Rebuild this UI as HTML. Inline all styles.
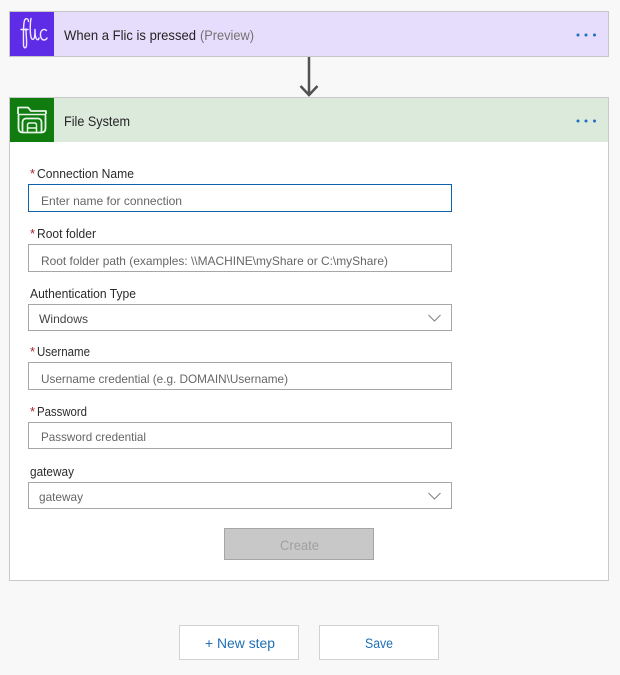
<!DOCTYPE html>
<html><head><meta charset="utf-8"><style>
html,body{margin:0;padding:0;background:#f8f8f8;width:620px;height:675px;overflow:hidden}
svg{display:block}
text{font-family:"Liberation Sans",sans-serif;fill:#252423}
.l{font-size:12.5px;fill:#2b2b2b}
.p{font-size:12px;fill:#666}
.r{font-size:13px;fill:#a8262c}
</style></head><body>
<svg width="620" height="675" viewBox="0 0 620 675" xmlns="http://www.w3.org/2000/svg">
<rect width="620" height="675" fill="#f8f8f8"/>
<rect x="9.5" y="11.5" width="599" height="45" fill="#e6dcfb" stroke="#c6c6c6"/>
<rect x="10" y="12" width="44" height="44" fill="#5e2ce6"/>
<g fill="none" stroke="#f1eaff" stroke-width="1.400" stroke-linecap="round" stroke-linejoin="round">
<path d="M21 29.500H28"/>
<path d="M28.500 21.500C28.500 18.500 25.500 17.500 24.500 20.500C23 25 23.500 38 23.500 44.500C23.500 48.500 26 49 26.500 45.500C27 41 26 35 26 29"/>
<path d="M31 18.500C30 24 30 33 31 37C31.500 39.500 33 40 34 38.500C35 37 35 33 35 29.500C35 33.500 35 38 37 39.500C38 40 38.800 39.500 39 38"/>
<path d="M46.500 30.500C44.500 28.500 41 29.500 40.500 33.500C40 37.500 42 40 44 40C45.500 40 46.500 39 47 38"/>
</g>
<text x="64" y="40" font-size="14" textLength="132" lengthAdjust="spacingAndGlyphs">When a Flic is pressed</text>
<text x="200" y="40" font-size="14" textLength="54" lengthAdjust="spacingAndGlyphs" style="fill:#737373">(Preview)</text>
<g fill="#1f6fc0"><circle cx="578" cy="35" r="1.500"/><circle cx="586" cy="35" r="1.500"/><circle cx="594.500" cy="35" r="1.500"/></g>
<path d="M309 57V95M300.500 86L309 95L317.500 86" fill="none" stroke="#525252" stroke-width="2.500"/>
<rect x="9.5" y="97.500" width="599" height="483" fill="#fff" stroke="#c9c9c9"/>
<rect x="10" y="98" width="598" height="44" style="fill:#dceadc"/>
<rect x="10" y="98" width="44" height="44" fill="#107c10"/>
<g fill="none" stroke="#e6f4e6" stroke-width="1.800" stroke-linejoin="round">
<path d="M18 114V107.500H28L31 111H46V114"/>
<path d="M18 114.500H46" stroke-width="1.500"/>
<path d="M18.500 114.500V128C18.500 131 20 132.500 22.500 132.500H41.500C44 132.500 45.500 131 45.500 128V114.500"/>
<path d="M22.500 132V122.500C22.500 120 24 118.500 26 118.500H38C40 118.500 41.500 120 41.500 122.500V132"/>
<path d="M27.500 132V125C27.500 123.500 28.500 123 29.500 123H34.500C35.500 123 36.500 123.500 36.500 125V132M27.500 128H36.500" stroke-width="1.500"/>
</g>
<text x="64" y="126" font-size="14" textLength="66" lengthAdjust="spacingAndGlyphs">File System</text>
<g fill="#1f6fc0"><circle cx="578" cy="121" r="1.500"/><circle cx="586" cy="121" r="1.500"/><circle cx="594.500" cy="121" r="1.500"/></g>

<text class="r" x="30" y="178">*</text>
<text class="l" x="37" y="178" textLength="97" lengthAdjust="spacingAndGlyphs">Connection Name</text>
<rect x="28.500" y="184.500" width="423" height="27" fill="#fff" stroke="#0f62ae" stroke-width="1"/>
<text class="p" x="41" y="205" textLength="141" lengthAdjust="spacingAndGlyphs">Enter name for connection</text>

<text class="r" x="30" y="238">*</text>
<text class="l" x="37" y="238" textLength="59" lengthAdjust="spacingAndGlyphs">Root folder</text>
<rect x="28.500" y="244.500" width="423" height="27" fill="#fff" stroke="#a6a6a6"/>
<text class="p" x="41" y="265" textLength="347" lengthAdjust="spacingAndGlyphs">Root folder path (examples: \\MACHINE\myShare or C:\myShare)</text>

<text class="l" x="30" y="298" textLength="106" lengthAdjust="spacingAndGlyphs">Authentication Type</text>
<rect x="28.500" y="304.500" width="423" height="26" fill="#fff" stroke="#a6a6a6"/>
<text class="p" x="39" y="323" textLength="49" lengthAdjust="spacingAndGlyphs" style="fill:#444">Windows</text>
<path d="M428.500 315L434.500 321L440.500 315" fill="none" stroke="#808080" stroke-width="1"/>

<text class="r" x="30" y="356">*</text>
<text class="l" x="37" y="356" textLength="53" lengthAdjust="spacingAndGlyphs">Username</text>
<rect x="28.500" y="362.500" width="423" height="27" fill="#fff" stroke="#a6a6a6"/>
<text class="p" x="41" y="383" textLength="247" lengthAdjust="spacingAndGlyphs">Username credential (e.g. DOMAIN\Username)</text>

<text class="r" x="30" y="416">*</text>
<text class="l" x="37" y="416" textLength="50" lengthAdjust="spacingAndGlyphs">Password</text>
<rect x="28.500" y="422.500" width="423" height="26" fill="#fff" stroke="#a6a6a6"/>
<text class="p" x="41" y="441" textLength="105" lengthAdjust="spacingAndGlyphs">Password credential</text>

<text class="l" x="30" y="476" textLength="44" lengthAdjust="spacingAndGlyphs">gateway</text>
<rect x="28.500" y="482.500" width="423" height="26" fill="#fff" stroke="#a6a6a6"/>
<text class="p" x="39" y="501" textLength="44" lengthAdjust="spacingAndGlyphs">gateway</text>
<path d="M428.500 493L434.500 499L440.500 493" fill="none" stroke="#808080" stroke-width="1"/>

<rect x="224.500" y="528.500" width="149" height="31" fill="#c8c8c8" stroke="#a6a6a6"/>
<text x="280" y="550" font-size="14" textLength="39" lengthAdjust="spacingAndGlyphs" style="fill:#a0a0a0">Create</text>

<rect x="179.500" y="625.500" width="119" height="34" fill="#fff" stroke="#d2d2d2"/>
<text x="205" y="648" font-size="13.5" textLength="70" lengthAdjust="spacingAndGlyphs" style="fill:#1f6fb5">+ New step</text>
<rect x="319.500" y="625.500" width="119" height="34" fill="#fff" stroke="#d2d2d2"/>
<text x="365" y="648" font-size="13.5" textLength="28" lengthAdjust="spacingAndGlyphs" style="fill:#1f6fb5">Save</text>
</svg>
</body></html>
